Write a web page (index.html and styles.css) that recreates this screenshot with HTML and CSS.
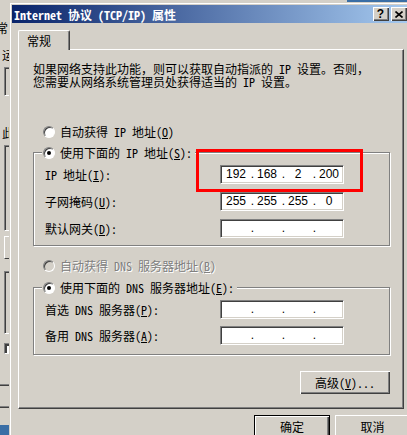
FILE: index.html
```html
<!DOCTYPE html>
<html lang="zh-CN">
<head>
    <meta charset="UTF-8">
    <meta name="viewport" content="width=device-width, initial-scale=1.0">
    <title>Internet 协议 (TCP/IP) 属性</title>
    <link rel="stylesheet" href="styles.css">
</head>
<body>
    <!-- ventana de atrás, solo asoma el borde izquierdo -->
    <div class="behind">
        <span class="behind-text t1">常</span>
        <span class="behind-text t2">运</span>
        <div class="behind-box b1"></div>
        <span class="behind-text t3">此</span>
        <div class="behind-box b2"></div>
        <div class="behind-btn"></div>
        <div class="behind-box b4"></div>
        <div class="behind-check"></div>
        <div class="behind-line l1"></div>
        <div class="behind-line l2"></div>
        <div class="behind-desk"></div>
        <div class="behind-top"></div>
    </div>

    <div class="dialog">
        <div class="titlebar">
            <span class="title">Internet 协议 (TCP/IP) 属性</span>
            <div class="title-btns">
                <span class="tbtn help">?</span>
                <span class="tbtn">
                    <svg width="8" height="7" viewBox="0 0 8 7"><path d="M0.5 0.5 L7.5 6.5 M7.5 0.5 L0.5 6.5" stroke="#000" stroke-width="1.6" fill="none"/></svg>
                </span>
            </div>
        </div>

        <div class="dialog-body">
            <div class="tabs">
                <div class="tab">常规</div>
            </div>

            <div class="panel">
                <p class="intro">如果网络支持此功能<span class="fw">，</span>则可以获取自动指派的 IP 设置<span class="fw">。</span>否则<span class="fw">，</span><br>您需要从网络系统管理员处获得适当的 IP 设置<span class="fw">。</span></p>

                <div class="radio first">
                    <span class="circle"></span>自动获得 IP 地址(<u>O</u>)
                </div>

                <fieldset class="group">
                    <legend><span class="radio"><span class="circle on"></span>使用下面的 IP 地址(<u>S</u>):</span></legend>
                    <div class="row">
                        <span class="lbl">IP 地址(<u>I</u>):</span>
                        <div class="ip"><span class="ip-part">192</span><span class="ip-dot">.</span><span class="ip-part">168</span><span class="ip-dot">.</span><span class="ip-part">2</span><span class="ip-dot">.</span><span class="ip-part">200</span></div>
                    </div>
                    <div class="row">
                        <span class="lbl">子网掩码(<u>U</u>):</span>
                        <div class="ip"><span class="ip-part">255</span><span class="ip-dot">.</span><span class="ip-part">255</span><span class="ip-dot">.</span><span class="ip-part">255</span><span class="ip-dot">.</span><span class="ip-part">0</span></div>
                    </div>
                    <div class="row">
                        <span class="lbl">默认网关(<u>D</u>):</span>
                        <div class="ip"><span class="ip-part"></span><span class="ip-dot">.</span><span class="ip-part"></span><span class="ip-dot">.</span><span class="ip-part"></span><span class="ip-dot">.</span><span class="ip-part"></span></div>
                    </div>
                </fieldset>

                <div class="radio disabled">
                    <span class="circle off"></span>自动获得 DNS 服务器地址(<u>B</u>)
                </div>

                <fieldset class="group dns">
                    <legend><span class="radio"><span class="circle on"></span>使用下面的 DNS 服务器地址(<u>E</u>):</span></legend>
                    <div class="row">
                        <span class="lbl">首选 DNS 服务器(<u>P</u>):</span>
                        <div class="ip"><span class="ip-part"></span><span class="ip-dot">.</span><span class="ip-part"></span><span class="ip-dot">.</span><span class="ip-part"></span><span class="ip-dot">.</span><span class="ip-part"></span></div>
                    </div>
                    <div class="row">
                        <span class="lbl">备用 DNS 服务器(<u>A</u>):</span>
                        <div class="ip"><span class="ip-part"></span><span class="ip-dot">.</span><span class="ip-part"></span><span class="ip-dot">.</span><span class="ip-part"></span><span class="ip-dot">.</span><span class="ip-part"></span></div>
                    </div>
                </fieldset>

                <div class="adv-row">
                    <button class="btn adv">高级(<u>V</u>)...</button>
                </div>

                <div class="red-mark"></div>
            </div>

            <div class="actions">
                <button class="btn default">确定</button>
                <button class="btn">取消</button>
            </div>
        </div>
    </div>
</body>
</html>
```

FILE: styles.css
```css
* {
    box-sizing: border-box;
}
body {
    margin: 0;
    width: 407px;
    height: 435px;
    overflow: hidden;
    position: relative;
    background-color: #d4d0c8;
    font-family: "Noto Sans CJK SC", sans-serif;
    font-size: 12px;
    line-height: 13px;
    color: #000;
    font-feature-settings: "hwid";
}
u {
    text-decoration: underline;
    text-underline-offset: 1px;
}
.fw {
    font-feature-settings: normal;
}

/* ventana de atrás */
.behind {
    position: absolute;
    left: 0;
    top: 0;
    width: 12px;
    height: 435px;
}
.behind-text {
    position: absolute;
}
.t1 { left: -4px; top: 21px; }
.t2 { left: 2px; top: 48px; }
.t3 { left: 2px; top: 126px; }
.behind-box {
    position: absolute;
    left: 4px;
    width: 12px;
    border: 1px solid;
    border-color: #808080 #fff #fff #808080;
    box-shadow: inset 1px 1px 0 #404040;
}
.b1 { top: 67px; height: 29px; }
.b2 { top: 145px; height: 86px; }
.b4 { top: 271px; height: 63px; }
.behind-btn {
    position: absolute;
    left: 4px;
    top: 236px;
    width: 12px;
    height: 23px;
    border-left: 1px solid #fff;
    border-top: 1px solid #fff;
    border-bottom: 1px solid #404040;
}
.behind-check {
    position: absolute;
    left: 4px;
    top: 343px;
    width: 10px;
    height: 11px;
    background-color: #fff;
    border: 1px solid;
    border-color: #808080 #fff #fff #808080;
    box-shadow: inset 2px 2px 0 #404040;
}
.behind-line {
    position: absolute;
    left: 0;
    width: 12px;
    border-top: 1px solid #808080;
    border-bottom: 1px solid #404040;
}
.l1 { top: 384px; }
.l2 { top: 406px; }
.behind-desk {
    position: absolute;
    left: 0;
    top: 425px;
    width: 12px;
    height: 10px;
    background-color: #3a6ea5;
}
.behind-top {
    position: absolute;
    left: 347px;
    top: 0;
    width: 60px;
    height: 2px;
    background-color: #3a6ea5;
}

/* diálogo */
.dialog {
    position: absolute;
    left: 9px;
    top: 2px;
    width: 402px;
    height: 445px;
    border-left: 1px solid #d4d0c8;
    border-top: 1px solid #d4d0c8;
    box-shadow: inset 1px 1px 0 #fff;
    padding: 2px 0 0 2px;
    background-color: #d4d0c8;
}
.titlebar {
    width: 397px;
    height: 18px;
    display: flex;
    align-items: center;
    justify-content: space-between;
    padding: 0 2px;
    background: linear-gradient(to right, #0a246a, #a6caf0);
}
.title {
    color: #fff;
    font-weight: bold;
    white-space: nowrap;
}
.title-btns {
    display: flex;
    gap: 2px;
}
.tbtn {
    width: 16px;
    height: 14px;
    display: flex;
    align-items: center;
    justify-content: center;
    background-color: #d4d0c8;
    box-shadow: inset 1px 1px 0 #fff, inset -1px -1px 0 #404040, inset -2px -2px 0 #808080;
}
.help {
    font-family: "Liberation Sans", sans-serif;
    font-weight: bold;
    font-size: 12px;
    padding-right: 1px;
}

.dialog-body {
    padding: 7px 0 0 6px;
}
.tabs {
    display: flex;
    position: relative;
    z-index: 1;
}
.tab {
    width: 52px;
    height: 20px;
    margin-bottom: -1px;
    padding-left: 8px;
    padding-top: 3px;
    background-color: #d4d0c8;
    border-top: 1px solid #fff;
    border-left: 1px solid #fff;
    border-right: 1px solid #404040;
    border-radius: 2px 2px 0 0;
    box-shadow: inset -1px 0 0 #808080;
}
.panel {
    position: relative;
    width: 386px;
    height: 360px;
    border: 1px solid;
    border-color: #fff #404040 #404040 #fff;
    box-shadow: inset -1px -1px 0 #808080;
    padding: 12px 13px 0 14px;
}
.intro {
    margin: 0;
}

.radio {
    display: flex;
    align-items: center;
    height: 13px;
    white-space: nowrap;
}
.radio.first {
    margin-top: 37px;
    padding-left: 10px;
}
.radio.disabled {
    margin-top: 13px;
    padding-left: 10px;
    color: #808080;
    text-shadow: 1px 1px 0 #fff;
}
.circle {
    position: relative;
    width: 12px;
    height: 12px;
    margin-right: 5px;
    border-radius: 50%;
    background-color: #fff;
    border: 1px solid;
    border-color: #808080 #fff #fff #808080;
    box-shadow: inset 1px 1px 0 #404040;
    flex-shrink: 0;
}
.circle.on::after {
    content: "";
    position: absolute;
    left: 3px;
    top: 3px;
    width: 4px;
    height: 4px;
    border-radius: 50%;
    background-color: #000;
}
.circle.off {
    background-color: #d4d0c8;
}

.group {
    margin: 8px 0 0 0;
    padding: 6px 0 7px 11px;
    border: 1px solid #808080;
    box-shadow: inset 1px 1px 0 #fff, 1px 1px 0 #fff;
    display: flex;
    flex-direction: column;
    gap: 8px;
}
.group legend {
    margin-left: -3px;
    padding: 0 3px 0 1px;
    background-color: #d4d0c8;
}
.group.dns {
    margin-top: 9px;
    padding-bottom: 9px;
    gap: 7px;
}
.row {
    display: flex;
    align-items: center;
}
.lbl {
    width: 175px;
    white-space: nowrap;
}
.ip {
    width: 124px;
    height: 19px;
    display: flex;
    align-items: center;
    padding-left: 2px;
    background-color: #fff;
    border: 1px solid;
    border-color: #808080 #fff #fff #808080;
    box-shadow: inset 1px 1px 0 #404040, inset -1px -1px 0 #d4d0c8;
    font-family: "Liberation Sans", sans-serif;
    font-feature-settings: normal;
}
.ip-part {
    width: 26px;
    text-align: center;
}
.ip-dot {
    width: 5px;
    text-align: right;
}

.adv-row {
    display: flex;
    justify-content: flex-end;
    margin-top: 16px;
}
.btn {
    font-family: "Noto Sans CJK SC", sans-serif;
    font-size: 12px;
    line-height: 13px;
    font-feature-settings: "hwid";
    color: #000;
    background-color: #d4d0c8;
    border: none;
    padding: 0;
    box-shadow: inset 1px 1px 0 #fff, inset -1px -1px 0 #404040, inset -2px -2px 0 #808080;
    width: 75px;
    height: 23px;
}
.btn.adv {
    width: 90px;
    height: 23px;
}
.btn.default {
    width: 76px;
    border: 1px solid #000;
}

.actions {
    display: flex;
    justify-content: flex-end;
    gap: 5px;
    width: 392px;
    margin-top: 6px;
}

/* marca roja alrededor de la dirección IP */
.red-mark {
    position: absolute;
    left: 177px;
    top: 99px;
    width: 167px;
    height: 43px;
    border: 3px solid #ff0000;
}
```
